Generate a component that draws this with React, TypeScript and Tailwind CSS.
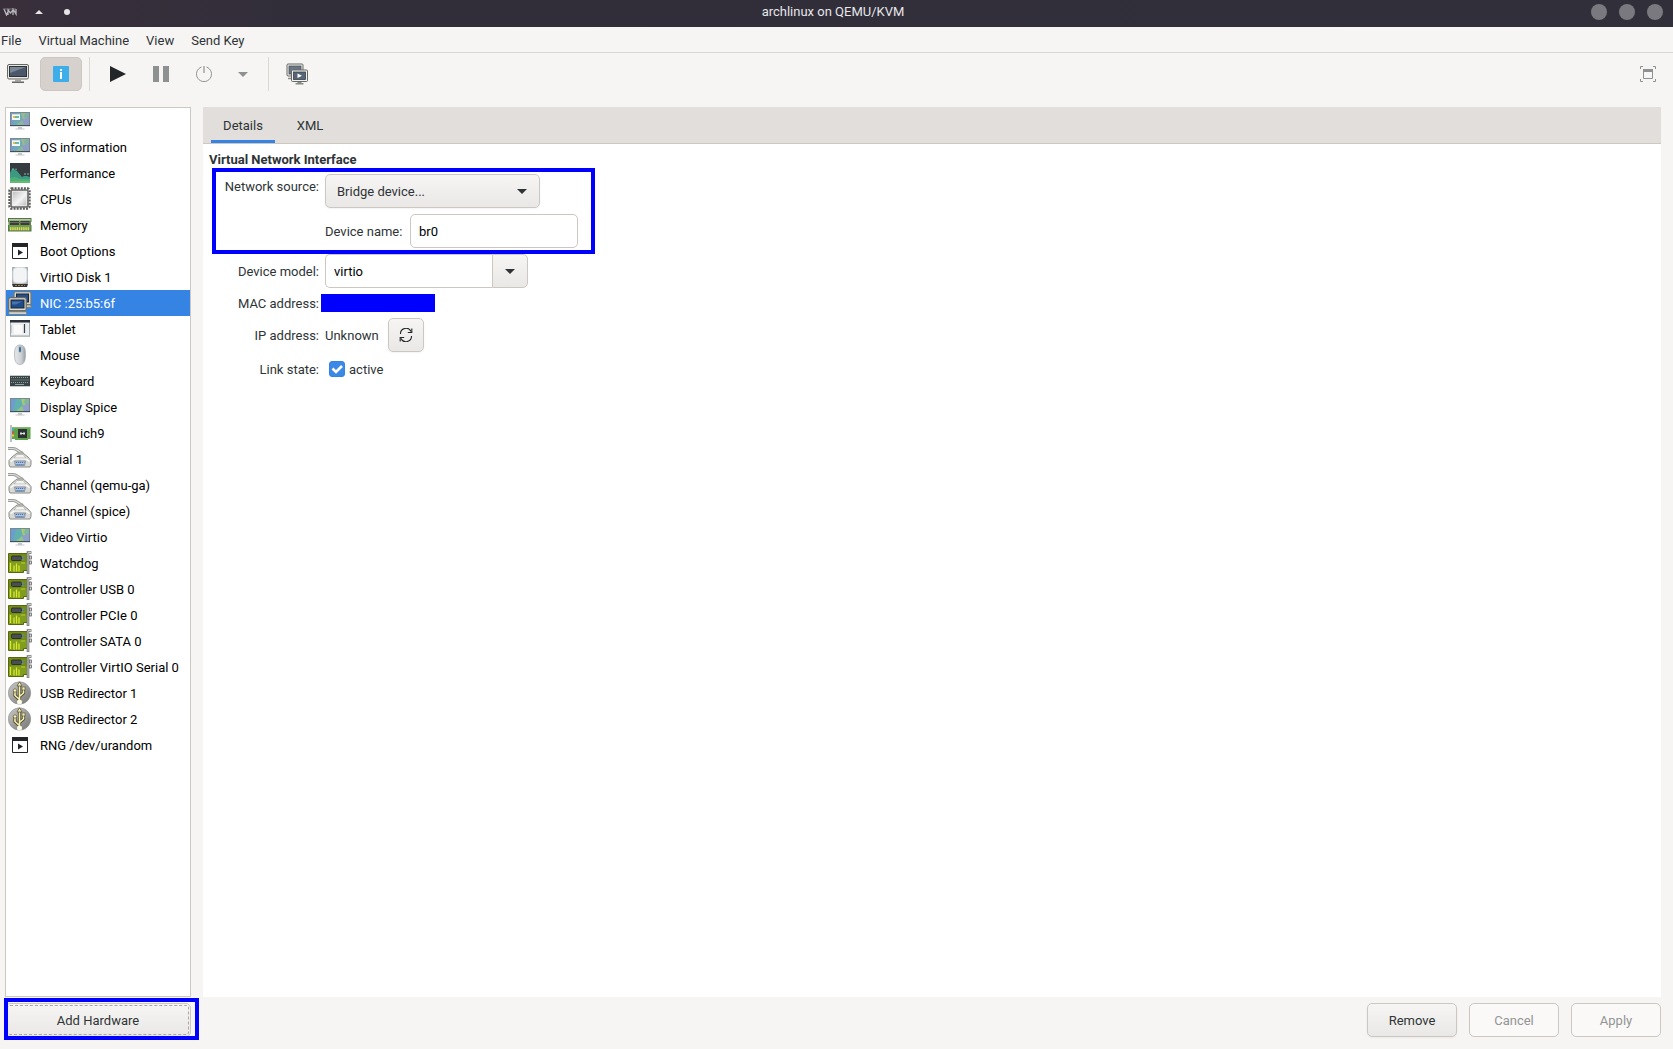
import { useState } from 'react';
import type { ReactNode } from 'react';

interface HardwareItem {
  label: string;
  icon: ReactNode;
}

const Screen = ({ windowed = false }: { windowed?: boolean }) => (
  <svg viewBox="0 0 24 24" className="h-6 w-6">
    <path d="M10 18h4v1.500h2.500v1h-9v-1H10z" fill="#c3c7ca" />
    <rect x="2" y="3" width="20" height="15" fill="#7d8790" />
    <rect x="3" y="4" width="18" height="12" fill="#6fa9a4" />
    <path d="M3 4h5l-1 12H3z" fill="#6c9cd0" />
    <path d="M8 4h6l2 5-8 7H5z" fill="#62b0b0" />
    <path d="M13 4h8v4l-6 3z" fill="#a3c878" />
    <path d="M17 4h4v8l-5-4z" fill="#7fb89a" />
    <path d="M14 11l7-3v8h-6z" fill="#8f9fcb" />
    <path d="M8 16l6-5 2 5z" fill="#8cc48c" />
    {windowed && (
      <>
        <path d="M3 4h18v12H3z" fill="#8aa0c0" fillOpacity="0.35" />
        <rect x="4" y="5" width="8" height="6" fill="#f3f6f5" />
        <rect x="4" y="5" width="8" height="1" fill="#cfe3e4" />
        <rect x="5" y="7" width="2" height="2" fill="#f3b65c" />
        <rect x="7" y="7" width="2" height="2" fill="#6fc06a" />
        <rect x="9" y="7" width="2" height="2" fill="#5fb7dc" />
      </>
    )}
    <rect x="2" y="16" width="20" height="1" fill="#454f59" />
    <rect x="2" y="17" width="20" height="1" fill="#dfe2e4" />
  </svg>
);

const Performance = () => (
  <svg viewBox="0 0 24 24" className="h-6 w-6">
    <rect x="2" y="2" width="20" height="20" fill="#353b40" />
    <path d="M2 12l2-4 2 0 2 2 1 0 5 6 2-1h3l3 1v6H2z" fill="#3d9a82" />
    <path d="M2 17l5-1 5 2h10v4H2z" fill="#4fae78" />
    <path d="M2 20h20v2H2z" fill="#66bb70" />
    <path d="M5 9V7M8 9.500V7.500M17 14v-2M20 14v-2" stroke="#6ec7b0" strokeWidth="1" fill="none" />
  </svg>
);

const Cpu = () => (
  <svg viewBox="0 0 24 24" className="h-6 w-6">
    <defs>
      <linearGradient id="cpu" x1="0" y1="0" x2="1" y2="1">
        <stop offset="0" stopColor="#b4b4b4" />
        <stop offset="0.55" stopColor="#f4f4f4" />
        <stop offset="1" stopColor="#b0b0b0" />
      </linearGradient>
    </defs>
    <rect x="1.500" y="1.500" width="20" height="20" rx="2" fill="none" stroke="#5b5d58" strokeWidth="2.400" strokeDasharray="2 1.100" />
    <rect x="3" y="3" width="17" height="17" rx="1.500" fill="url(#cpu)" stroke="#6a6a68" strokeWidth="1.600" />
    <rect x="4.500" y="4.500" width="14" height="14" fill="none" stroke="#ececec" strokeWidth="0.800" />
  </svg>
);

const Memory = () => (
  <svg viewBox="0 0 24 24" className="h-6 w-6">
    <rect x="0.500" y="5.500" width="22.500" height="12.500" fill="#6f9d50" stroke="#55754a" />
    <rect x="1" y="6" width="21.500" height="1.500" fill="#b4c9a2" />
    <rect x="2" y="8" width="9" height="4" fill="#3d3a3c" />
    <rect x="12.500" y="8" width="9" height="4" fill="#3d3a3c" />
    <rect x="2" y="9" width="19.500" height="1" fill="#6b686a" />
    <path d="M2 15.800h19.500" stroke="#e4d85a" strokeWidth="3" strokeDasharray="1.400 0.800" />
    <path d="M0 9v3M23.500 9v3" stroke="#fff" strokeWidth="1" />
  </svg>
);

const Terminal = () => (
  <svg viewBox="0 0 24 24" className="h-6 w-6">
    <path d="M4.500 4.500h15v15h-15z" fill="#fff" stroke="#232629" />
    <path d="M4 4h16v4H4z" fill="#232629" />
    <path d="M10 10.500l5 3-5 3z" fill="#232629" />
  </svg>
);

const Disk = () => (
  <svg viewBox="0 0 24 24" className="h-6 w-6">
    <path d="M4 2h16v17H4z" fill="#a9b1b5" />
    <path d="M4 19h16l-1 3H5z" fill="#34383b" />
    <rect x="5" y="2.500" width="14" height="15.500" rx="4" fill="#f3f4f6" stroke="#d8dbe0" />
    <path d="M7 20.500h10" stroke="#b0813a" strokeWidth="1" strokeDasharray="2 1" />
  </svg>
);

const Network = () => (
  <svg viewBox="0 0 24 24" className="h-6 w-6">
    <path d="M15 13h7l1.500 3.500H17z" fill="#c4c4bb" stroke="#77786f" strokeWidth="0.800" />
    <rect x="6" y="0.700" width="17" height="13" rx="1.500" fill="#d6d6ce" stroke="#77786f" strokeWidth="1.200" />
    <rect x="8.500" y="3" width="12" height="8" fill="#23508c" stroke="#20262f" />
    <rect x="0.700" y="6.700" width="17.500" height="13" rx="1.500" fill="#dcdcd4" stroke="#6b6c64" strokeWidth="1.200" />
    <rect x="3" y="9" width="13" height="8" fill="#1f4c8a" stroke="#20262f" />
    <path d="M4 10.500h10l-6 3H4z" fill="#4674ae" />
    <path d="M5 19.500h9l1 1.500H4z" fill="#77786f" />
    <rect x="0.700" y="20.700" width="18" height="2.800" rx="1" fill="#d2d2ca" stroke="#77786f" strokeWidth="0.900" />
  </svg>
);

const Tablet = () => (
  <svg viewBox="0 0 24 24" className="h-6 w-6">
    <rect x="2.500" y="3.500" width="19" height="15.500" fill="#eceeef" stroke="#a2a9ad" />
    <rect x="2" y="3" width="20" height="2.500" fill="#2a3138" />
    <rect x="6" y="8" width="8" height="9" fill="#fafafa" />
    <path d="M16.500 7v9" stroke="#39424a" strokeWidth="1.200" />
    <path d="M3.500 8v8" stroke="#c9ced2" />
    <path d="M2 19.500h20" stroke="#b8bdc0" />
  </svg>
);

const Mouse = () => (
  <svg viewBox="0 0 24 24" className="h-6 w-6">
    <defs>
      <linearGradient id="mouse" x1="0" x2="1">
        <stop offset="0" stopColor="#e6e8ea" />
        <stop offset="0.6" stopColor="#cdd1d5" />
        <stop offset="1" stopColor="#989ea4" />
      </linearGradient>
    </defs>
    <path d="M12 2c4 0 5.500 3 5.500 9s-1 10.500-5.500 10.500S6.500 17 6.500 11 8 2 12 2z" fill="url(#mouse)" stroke="#a4aab0" strokeWidth="0.700" />
    <path d="M10.500 2.500h3V9l-1.500 1-1.500-1z" fill="#b2bcc6" />
    <rect x="11" y="4" width="2" height="5" rx="1" fill="#3b6f92" />
  </svg>
);

const Keyboard = () => (
  <svg viewBox="0 0 24 24" className="h-6 w-6">
    <rect x="2" y="6" width="20" height="12" fill="#c3c8ca" />
    <rect x="2" y="7" width="20" height="10" fill="#3a4547" />
    <path d="M3 8.500h18M3.500 11h17M3 13.500h18" stroke="#8fa39f" strokeWidth="1" strokeDasharray="1 1" />
    <path d="M7 15.500h9" stroke="#8fa39f" />
  </svg>
);

const Sound = () => (
  <svg viewBox="0 0 24 24" className="h-6 w-6">
    <path d="M2 4h2v17H2z" fill="#b9c2c6" />
    <path d="M4 6h18.500v12H20v1H7v-1H4z" fill="#5fa04a" />
    <path d="M4 6h18.500v1.500H4z" fill="#82b96c" />
    <path d="M4 7.500h2v2H4z" fill="#3cb4d8" />
    <path d="M4 10.500h2v2H4z" fill="#e84a3c" />
    <path d="M4 13.500h2v2H4z" fill="#f0c33c" />
    <rect x="10" y="8" width="9" height="9" fill="#2c3234" />
    <path d="M12 12.500h5M13 11v3M16 11v3" stroke="#dfe3e3" strokeWidth="1" />
  </svg>
);

const Serial = () => (
  <svg viewBox="0 0 24 24" className="h-6 w-6">
    <path d="M0 1.500h5c4 0 5 3 10 5" fill="none" stroke="#9b9d98" strokeWidth="3" />
    <path d="M0 1.500h5c4 0 5 3 10 5" fill="none" stroke="#dcddd9" strokeWidth="1.200" />
    <path d="M4 10l5-4h6l5 4 3 3.500v4L22 20H2l-1-2.500v-4z" fill="#d9dad6" stroke="#8a8c87" />
    <path d="M9 7.500h6l3 3.500H6z" fill="#f4f4f2" stroke="#a7a9a4" strokeWidth="0.700" />
    <path d="M2.500 14.500L6 12h12l3.500 2.500" stroke="#fff" fill="none" strokeWidth="1.200" />
    <path d="M6.500 14h11l-1 4.500h-9z" fill="#b4c6e0" stroke="#6f7a8a" strokeWidth="0.700" />
    <path d="M8 15.500h8.500M8.500 17.500h7" stroke="#3f72b4" strokeWidth="1.200" strokeDasharray="1.200 0.800" />
  </svg>
);

const Card = () => (
  <svg viewBox="0 0 24 24" className="h-6 w-6">
    <path d="M0.500 2.500h19v17h-4v2h-15z" fill="#819d1e" stroke="#55680f" />
    <path d="M1 3h18v8H1z" fill="#748b16" />
    <rect x="3.500" y="5" width="10" height="4.500" rx="1" fill="#4a4e50" stroke="#202424" strokeWidth="0.800" />
    <path d="M13.500 6h3M13.500 8.500h3" stroke="#5c8dba" strokeWidth="1.200" />
    <path d="M2.500 12v8M6 14.500v6M8.500 12.500v8M11 14.500v6" stroke="#d9ea2c" strokeWidth="1.300" />
    <path d="M13 12h4" stroke="#b5cf2c" />
    <path d="M23.500 1.500H20V23" fill="none" stroke="#6d706e" strokeWidth="2.600" />
    <path d="M23.500 1.500H20V22.500" fill="none" stroke="#c9cbc9" strokeWidth="1" />
    <rect x="21.500" y="5" width="2" height="3" fill="#d6d8d6" stroke="#555" strokeWidth="0.700" />
    <rect x="21.500" y="10" width="2" height="3" fill="#d6d8d6" stroke="#555" strokeWidth="0.700" />
  </svg>
);

const Usb = () => (
  <svg viewBox="0 0 24 24" className="h-6 w-6">
    <defs>
      <linearGradient id="usb" x1="0" y1="0" x2="1" y2="1">
        <stop offset="0" stopColor="#c9cac8" />
        <stop offset="1" stopColor="#747673" />
      </linearGradient>
    </defs>
    <circle cx="11.500" cy="12" r="11.200" fill="url(#usb)" stroke="#8e908d" strokeWidth="0.600" />
    <g fill="none" stroke="#4d4a2a" strokeWidth="3.200">
      <path d="M11.500 4v17M11.500 18.500L7 14.500V9.500M11.500 15.500l4-3.500V8" />
    </g>
    <g fill="none" stroke="#f6efb4" strokeWidth="1.600">
      <path d="M11.500 4v17M11.500 18.500L7 14.500V9.500M11.500 15.500l4-3.500V8" />
    </g>
    <path d="M11.500 0.800L14 5H9z" fill="#f6efb4" stroke="#4d4a2a" strokeWidth="0.700" />
    <circle cx="7" cy="9.500" r="1.700" fill="#f6efb4" stroke="#4d4a2a" strokeWidth="0.600" />
    <rect x="14" y="6" width="3" height="3" fill="#f6efb4" stroke="#4d4a2a" strokeWidth="0.600" />
    <circle cx="11.500" cy="21" r="2.500" fill="#fdfbe8" />
  </svg>
);

const hardware: HardwareItem[] = [
  { label: 'Overview', icon: <Screen windowed /> },
  { label: 'OS information', icon: <Screen windowed /> },
  { label: 'Performance', icon: <Performance /> },
  { label: 'CPUs', icon: <Cpu /> },
  { label: 'Memory', icon: <Memory /> },
  { label: 'Boot Options', icon: <Terminal /> },
  { label: 'VirtIO Disk 1', icon: <Disk /> },
  { label: 'NIC :25:b5:6f', icon: <Network /> },
  { label: 'Tablet', icon: <Tablet /> },
  { label: 'Mouse', icon: <Mouse /> },
  { label: 'Keyboard', icon: <Keyboard /> },
  { label: 'Display Spice', icon: <Screen /> },
  { label: 'Sound ich9', icon: <Sound /> },
  { label: 'Serial 1', icon: <Serial /> },
  { label: 'Channel (qemu-ga)', icon: <Serial /> },
  { label: 'Channel (spice)', icon: <Serial /> },
  { label: 'Video Virtio', icon: <Screen /> },
  { label: 'Watchdog', icon: <Card /> },
  { label: 'Controller USB 0', icon: <Card /> },
  { label: 'Controller PCIe 0', icon: <Card /> },
  { label: 'Controller SATA 0', icon: <Card /> },
  { label: 'Controller VirtIO Serial 0', icon: <Card /> },
  { label: 'USB Redirector 1', icon: <Usb /> },
  { label: 'USB Redirector 2', icon: <Usb /> },
  { label: 'RNG /dev/urandom', icon: <Terminal /> },
];

const Arrow = ({ className }: { className: string }) => (
  <svg viewBox="0 0 10 5" className={className}>
    <path d="M0 0h10L5 5z" fill="currentColor" />
  </svg>
);

const TitleBar = () => (
  <header className="grid h-[27px] grid-cols-[1fr_auto_1fr] items-center bg-linear-to-r from-[#382f3b] via-[#312e39] via-20% to-[#312f39] pr-[10px] pb-[3px] pl-[3px] text-[#e6e6e8]">
    <div className="flex items-center">
      <svg viewBox="0 0 14 8" className="h-2 w-[14px]">
        <path d="M1 1l2.500 6L6 1M5 7V2l2.500 3L10 2v5M10 7V1l3 5V1" fill="none" stroke="#b9b7bc" strokeWidth="1.300" />
        <path d="M0 1h13" stroke="#8a868e" strokeWidth="0.800" />
      </svg>
      <svg viewBox="0 0 8 4" className="ml-[18px] h-1 w-2">
        <path d="M0 4h8L4 0z" fill="currentColor" />
      </svg>
      <span className="ml-[21px] h-[6px] w-[6px] rounded-full bg-[#e6e6e8]" />
    </div>
    <h1 className="leading-6">archlinux on QEMU/KVM</h1>
    <div className="flex justify-end gap-3">
      <button aria-label="Minimize" className="h-4 w-4 rounded-full bg-[#7a797f]" />
      <button aria-label="Maximize" className="h-4 w-4 rounded-full bg-[#7a797f]" />
      <button aria-label="Close" className="h-4 w-4 rounded-full bg-[#7a797f]" />
    </div>
  </header>
);

const MenuBar = () => (
  <nav className="flex h-[26px] items-center gap-[17px] border-b border-[#d9d7d5] pt-[2px] pl-px">
    <button>File</button>
    <button>Virtual Machine</button>
    <button>View</button>
    <button>Send Key</button>
  </nav>
);

const Toolbar = () => (
  <div className="flex h-[54px] items-start pt-1 *:flex *:h-[34px] *:items-center *:justify-center">
    <button aria-label="Console" className="mr-1 w-9">
      <svg viewBox="0 0 22 20" className="h-5 w-[22px]">
        <rect x="0.500" y="0.500" width="21" height="14.500" rx="1.500" fill="#e6e6e4" stroke="#666863" />
        <rect x="2.500" y="2.500" width="17" height="10" fill="#4a586a" stroke="#2e3436" />
        <path d="M3 3h16L3 9z" fill="#7a8796" />
        <path d="M8 15.500h6v2H8z" fill="#a3a5a2" />
        <path d="M5 17.500h12v1.500H5z" fill="#666863" />
      </svg>
    </button>
    <button aria-label="Details" className="w-[42px] rounded-[5px] border border-[#cdc7c2] bg-[#d6d1cd]">
      <svg viewBox="0 0 16 16" className="h-4 w-4">
        <rect width="16" height="16" rx="1" fill="#3daee9" />
        <path d="M7 3h2v2H7zM7 6h2v7H7z" fill="#fff" />
      </svg>
    </button>
    <div className="mx-[7px] w-px bg-[#dad7d4]" />
    <button aria-label="Run" className="w-[42px]">
      <svg viewBox="0 0 16 16" className="h-4 w-4">
        <path d="M0 0l16 8-16 8z" fill="#232629" />
      </svg>
    </button>
    <button aria-label="Pause" className="w-[44px]">
      <svg viewBox="0 0 16 16" className="h-4 w-4">
        <path d="M0 0h6v16H0zM10 0h6v16h-6z" fill="#8e9192" />
      </svg>
    </button>
    <button aria-label="Shut down" className="w-[42px]">
      <svg viewBox="0 0 16 16" className="h-4 w-4">
        <path d="M5.500 1a7.500 7.500 0 1 0 5 0" fill="none" stroke="#8e9192" strokeWidth="1" />
        <path d="M8 0v7" stroke="#8e9192" strokeWidth="1.200" />
      </svg>
    </button>
    <button aria-label="Shut down options" className="w-9">
      <Arrow className="h-[5px] w-[10px] text-[#8e9192]" />
    </button>
    <div className="mx-[7px] w-px bg-[#dad7d4]" />
    <button aria-label="Snapshots" className="w-[42px]">
      <svg viewBox="0 0 22 22" className="h-[22px] w-[22px]">
        <rect x="1" y="1" width="16" height="12" rx="1" fill="#f0f0ee" stroke="#666863" />
        <rect x="3" y="3" width="12" height="8" fill="#6b7685" stroke="#4a5256" strokeWidth="0.800" />
        <path d="M2 15.500h4" stroke="#8d8f8c" strokeWidth="1.500" />
        <rect x="5.500" y="7" width="16" height="11.500" rx="1" fill="#f2f2f0" stroke="#666863" />
        <rect x="7.500" y="9" width="12" height="7.500" fill="#56657a" stroke="#3a4246" strokeWidth="0.800" />
        <path d="M11.500 10.500l4.500 2.300-4.500 2.300z" fill="#fff" />
        <path d="M11.500 19h4v1h2v1.500h-8V20h2z" fill="#888a85" />
      </svg>
    </button>
    <button aria-label="Fullscreen" className="mr-[7px] ml-auto w-9">
      <svg viewBox="0 0 16 16" className="h-4 w-4">
        <path d="M0.500 3V0.500H3M13 0.500h2.500V3M15.500 13v2.500H13M3 15.500H0.500V13" fill="none" stroke="#8e9192" />
        <path d="M3.500 3.500h9v9h-9z" fill="none" stroke="#8e9192" />
        <path d="M3 3h10v3H3z" fill="#8e9192" />
      </svg>
    </button>
  </div>
);

const NetworkForm = () => {
  const [model, setModel] = useState('virtio');
  const [device, setDevice] = useState('br0');

  return (
    <section className="flex-1 bg-white p-[6px]">
      <h2 className="pt-px leading-[18px] font-bold">Virtual Network Interface</h2>
      <div className="relative mt-[5px] grid grid-cols-[110px_1fr] items-center gap-[6px] leading-[18px]">
        <label htmlFor="source" className="self-start pt-1 text-right">Network source:</label>
        <div className="flex flex-col items-start gap-[6px]">
          <div className="relative">
            <select
              id="source"
              className="h-[34px] w-[215px] appearance-none rounded-[5px] border border-[#cdc7c2] bg-linear-to-b from-[#f6f5f4] to-[#eae8e6] pt-[2px] pl-[11px] shadow-xs"
            >
              <option>Bridge device...</option>
            </select>
            <Arrow className="pointer-events-none absolute top-[15px] right-[13px] h-[5px] w-[10px]" />
          </div>
          <div className="flex items-center gap-[6px]">
            <label htmlFor="device" className="w-[79px] pt-[2px]">Device name:</label>
            <input
              id="device"
              value={device}
              onChange={(e) => setDevice(e.target.value)}
              className="h-[34px] w-[168px] rounded-[5px] border border-[#cdc7c2] bg-white px-2 text-black"
            />
          </div>
        </div>

        <label htmlFor="model" className="pt-[2px] text-right">Device model:</label>
        <div className="flex">
          <input
            id="model"
            value={model}
            onChange={(e) => setModel(e.target.value)}
            className="h-[34px] w-[167px] rounded-l-[5px] border border-r-0 border-[#cdc7c2] bg-white px-2 text-black"
          />
          <button
            aria-label="Show models"
            className="flex h-[34px] w-9 items-center justify-center rounded-r-[5px] border border-[#cdc7c2] bg-linear-to-b from-[#f6f5f4] to-[#eae8e6]"
          >
            <Arrow className="h-[5px] w-[10px]" />
          </button>
        </div>

        <span className="h-[18px] pt-px text-right">MAC address:</span>
        <div className="-ml-1 h-[18px] w-[114px] bg-[#0000ff]" />

        <span className="pt-[2px] text-right">IP address:</span>
        <div className="flex items-center gap-[6px]">
          <span className="w-[57px] pt-[2px]">Unknown</span>
          <button
            aria-label="Refresh"
            className="flex h-[34px] w-9 items-center justify-center rounded-[5px] border border-[#cdc7c2] bg-linear-to-b from-[#f6f5f4] to-[#eae8e6] shadow-xs"
          >
            <svg viewBox="0 0 14 14" className="h-[14px] w-[14px]" fill="none" stroke="#232629" strokeWidth="1.100">
              <path d="M1.500 6a5.500 5.500 0 0 1 10.500-2.500M12.500 8A5.500 5.500 0 0 1 2 10.500" />
              <path d="M12.800 0.500v4h-4M1.200 13.500v-4h4" />
            </svg>
          </button>
        </div>

        <span className="pt-[2px] text-right">Link state:</span>
        <label className="flex h-[22px] items-center gap-1 pl-1">
          <span className="relative h-4 w-4">
            <input
              type="checkbox"
              defaultChecked
              className="peer block h-4 w-4 appearance-none rounded-[3px] border border-[#1b6acb] bg-white checked:border-[#3584e4] checked:bg-[#3c88e6]"
            />
            <svg viewBox="0 0 16 16" className="pointer-events-none absolute inset-0 hidden h-4 w-4 peer-checked:block">
              <path d="M3.500 7.500l3.500 3.500 6-6" fill="none" stroke="#fff" strokeWidth="2.600" />
            </svg>
          </span>
          <span className="pt-[2px]">active</span>
        </label>

        <div className="pointer-events-none absolute -top-[6px] left-[3px] h-[86px] w-[383px] border-4 border-[#0000ff]" />
      </div>
    </section>
  );
};

const App = () => {
  const [selected, setSelected] = useState('NIC :25:b5:6f');

  return (
    <div className="flex min-h-screen flex-col bg-[#f6f5f4] font-[Roboto,sans-serif] text-[13px] text-[#2e3436]">
      <TitleBar />
      <MenuBar />
      <Toolbar />
      <main className="flex flex-1 gap-3 pr-3 pb-3 pl-[5px]">
        <aside className="flex w-[186px] shrink-0 flex-col gap-[6px]">
          <ul className="flex-1 border border-[#cdc7c2] bg-white">
            {hardware.map(({ label, icon }) => (
              <li key={label}>
                <button
                  onClick={() => setSelected(label)}
                  className={`flex h-[26px] w-full items-center gap-2 pl-[2px] whitespace-nowrap ${
                    selected === label ? 'bg-[#3584e4] text-white' : 'text-black'
                  }`}
                >
                  {icon}
                  <span className="pt-[2px]">{label}</span>
                </button>
              </li>
            ))}
          </ul>
          <div className="relative">
            <button className="h-[34px] w-full rounded-[5px] border border-[#cdc7c2] bg-linear-to-b from-[#f6f5f4] to-[#eae8e6] p-px">
              <span className="flex h-full items-center justify-center rounded-[3px] border border-dashed border-[#aaa9a8] pt-[2px]">
                Add Hardware
              </span>
            </button>
            <div className="pointer-events-none absolute -top-[5px] -right-2 -bottom-[3px] -left-px border-4 border-[#0000ff]" />
          </div>
        </aside>

        <div className="flex min-w-0 flex-1 flex-col">
          <div className="flex h-[37px] border-b border-[#cdc7c2] bg-[#e1dedb] pl-2" role="tablist">
            <button role="tab" aria-selected="true" className="w-16 border-b-[3px] border-[#3584e4] pt-1">
              Details
            </button>
            <button role="tab" aria-selected="false" className="ml-[10px] w-[50px] border-b-[3px] border-transparent pt-1">
              XML
            </button>
          </div>
          <NetworkForm />
          <footer className="mt-[6px] flex justify-end gap-3">
            <button className="h-[34px] w-[90px] rounded-[5px] border border-[#cdc7c2] bg-linear-to-b from-[#f6f5f4] to-[#eae8e6] pt-[2px] shadow-xs">
              Remove
            </button>
            <button disabled className="h-[34px] w-[90px] rounded-[5px] border border-[#cdc7c2] bg-[#faf9f8] pt-[2px] text-[#929595]">
              Cancel
            </button>
            <button disabled className="h-[34px] w-[90px] rounded-[5px] border border-[#cdc7c2] bg-[#faf9f8] pt-[2px] text-[#929595]">
              Apply
            </button>
          </footer>
        </div>
      </main>
    </div>
  );
};

export default App;
